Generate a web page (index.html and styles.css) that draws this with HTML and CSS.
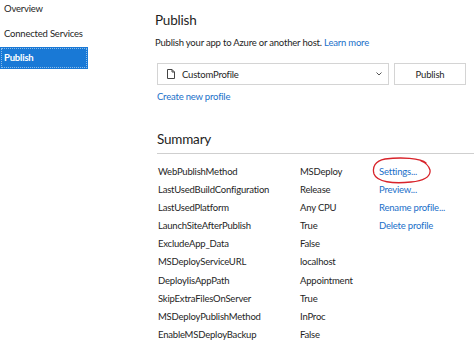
FILE: index.html
```html
<!DOCTYPE html>
<html lang="en">
<head>
    <meta charset="UTF-8">
    <title>Publish</title>
    <link rel="stylesheet" href="styles.css">
</head>
<body>
    <div class="layout">
        <nav class="sidebar">
            <div class="nav-item">Overview</div>
            <div class="nav-item">Connected Services</div>
            <div class="nav-item active">Publish</div>
        </nav>

        <main class="main">
            <h1>Publish</h1>
            <p class="intro">Publish your app to Azure or another host. <a href="#">Learn more</a></p>

            <div class="profile-row">
                <div class="select">
                    <svg class="doc-icon" width="8" height="10" viewBox="0 0 8 10">
                        <path d="M0.5 0.5 H5 L7.5 3 V9.5 H0.5 Z M5 0.5 V3 H7.5" fill="none" stroke="#444" stroke-width="1"/>
                    </svg>
                    <span class="select-text">CustomProfile</span>
                    <svg class="chevron" width="6" height="4" viewBox="0 0 6 4">
                        <path d="M0.5 0.5 L3 3 L5.5 0.5" fill="none" stroke="#555" stroke-width="1"/>
                    </svg>
                </div>
                <button class="btn">Publish</button>
            </div>
            <a href="#" class="create-link">Create new profile</a>

            <h2>Summary</h2>
            <div class="summary">
                <div class="props">
                    <div class="prop"><span class="key">WebPublishMethod</span><span class="val">MSDeploy</span></div>
                    <div class="prop"><span class="key">LastUsedBuildConfiguration</span><span class="val">Release</span></div>
                    <div class="prop"><span class="key">LastUsedPlatform</span><span class="val">Any CPU</span></div>
                    <div class="prop"><span class="key">LaunchSiteAfterPublish</span><span class="val">True</span></div>
                    <div class="prop"><span class="key">ExcludeApp_Data</span><span class="val">False</span></div>
                    <div class="prop"><span class="key">MSDeployServiceURL</span><span class="val">localhost</span></div>
                    <div class="prop"><span class="key">DeployIisAppPath</span><span class="val">Appointment</span></div>
                    <div class="prop"><span class="key">SkipExtraFilesOnServer</span><span class="val">True</span></div>
                    <div class="prop"><span class="key">MSDeployPublishMethod</span><span class="val">InProc</span></div>
                    <div class="prop"><span class="key">EnableMSDeployBackup</span><span class="val">False</span></div>
                </div>
                <div class="actions">
                    <a href="#" class="action settings">Settings...
                        <svg class="circle" width="64" height="30" viewBox="0 0 64 30">
                            <path d="M55 6 C50 1 30 0 14 2 C4 4 1 10 3 17 C6 25 22 27 40 25 C52 24 60 20 59 13 C58 9 55 6 50 4" fill="none" stroke="#d8232a" stroke-width="1.3" stroke-linecap="round"/>
                        </svg>
                    </a>
                    <a href="#" class="action">Preview...</a>
                    <a href="#" class="action">Rename profile...</a>
                    <a href="#" class="action">Delete profile</a>
                </div>
            </div>
        </main>
    </div>
</body>
</html>
```

FILE: styles.css
```css
body {
    margin: 0;
    background: #fff;
    font-family: 'Lato', 'Open Sans', sans-serif;
    font-size: 9.5px;
    letter-spacing: -0.2px;
    color: #1e1e1e;
    overflow: hidden;
}

a {
    color: #1a6fc9;
    text-decoration: none;
}

.layout {
    display: flex;
    height: 350px;
}

.sidebar {
    width: 88px;
    flex-shrink: 0;
    padding-top: 1px;
}

.nav-item {
    height: 16px;
    line-height: 16px;
    padding-left: 4px;
    margin-bottom: 9px;
    white-space: nowrap;
}

.nav-item.active {
    height: 22px;
    margin-top: -4px;
    background-color: #1979d6;
    color: #fff;
    font-weight: 700;
    line-height: 22px;
    outline: 1px dotted #8bbbe8;
    outline-offset: -2px;
}

.main {
    flex: 1;
    padding-left: 67px;
}

h1 {
    font-size: 13.5px;
    font-weight: 400;
    margin: 9px 0 0 0;
    line-height: 22px;
}

.intro {
    margin: 5px 0 0 0;
    line-height: 14px;
}

.profile-row {
    display: flex;
    gap: 5px;
    margin-top: 13px;
    margin-left: 2px;
}

.select {
    width: 232px;
    height: 22px;
    border: 1px solid #d4d4d4;
    display: flex;
    align-items: center;
    padding: 0 6px 0 9px;
    box-sizing: border-box;
}

.doc-icon {
    margin-right: 7px;
}

.select-text {
    flex: 1;
}

.btn {
    width: 72px;
    height: 22px;
    border: 1px solid #d4d4d4;
    background: #fff;
    font-family: inherit;
    font-size: 9.5px;
    letter-spacing: -0.2px;
    color: #1e1e1e;
    padding: 0;
}

.create-link {
    display: block;
    margin: 5px 0 0 2px;
    line-height: 14px;
}

h2 {
    font-size: 13.5px;
    font-weight: 400;
    margin: 24px 0 0 2px;
    line-height: 22px;
}

.summary {
    display: flex;
    border-top: 1px solid #cfcfcf;
    margin-top: 3px;
    margin-left: 2px;
    padding-top: 9px;
    padding-left: 1px;
}

.prop {
    display: flex;
    height: 18.1px;
    line-height: 18.1px;
}

.key {
    width: 142px;
}

.val {
    width: 79px;
}

.action {
    display: block;
    height: 18.1px;
    line-height: 18.1px;
    position: relative;
}

.circle {
    position: absolute;
    left: -8px;
    top: -6px;
}
```
